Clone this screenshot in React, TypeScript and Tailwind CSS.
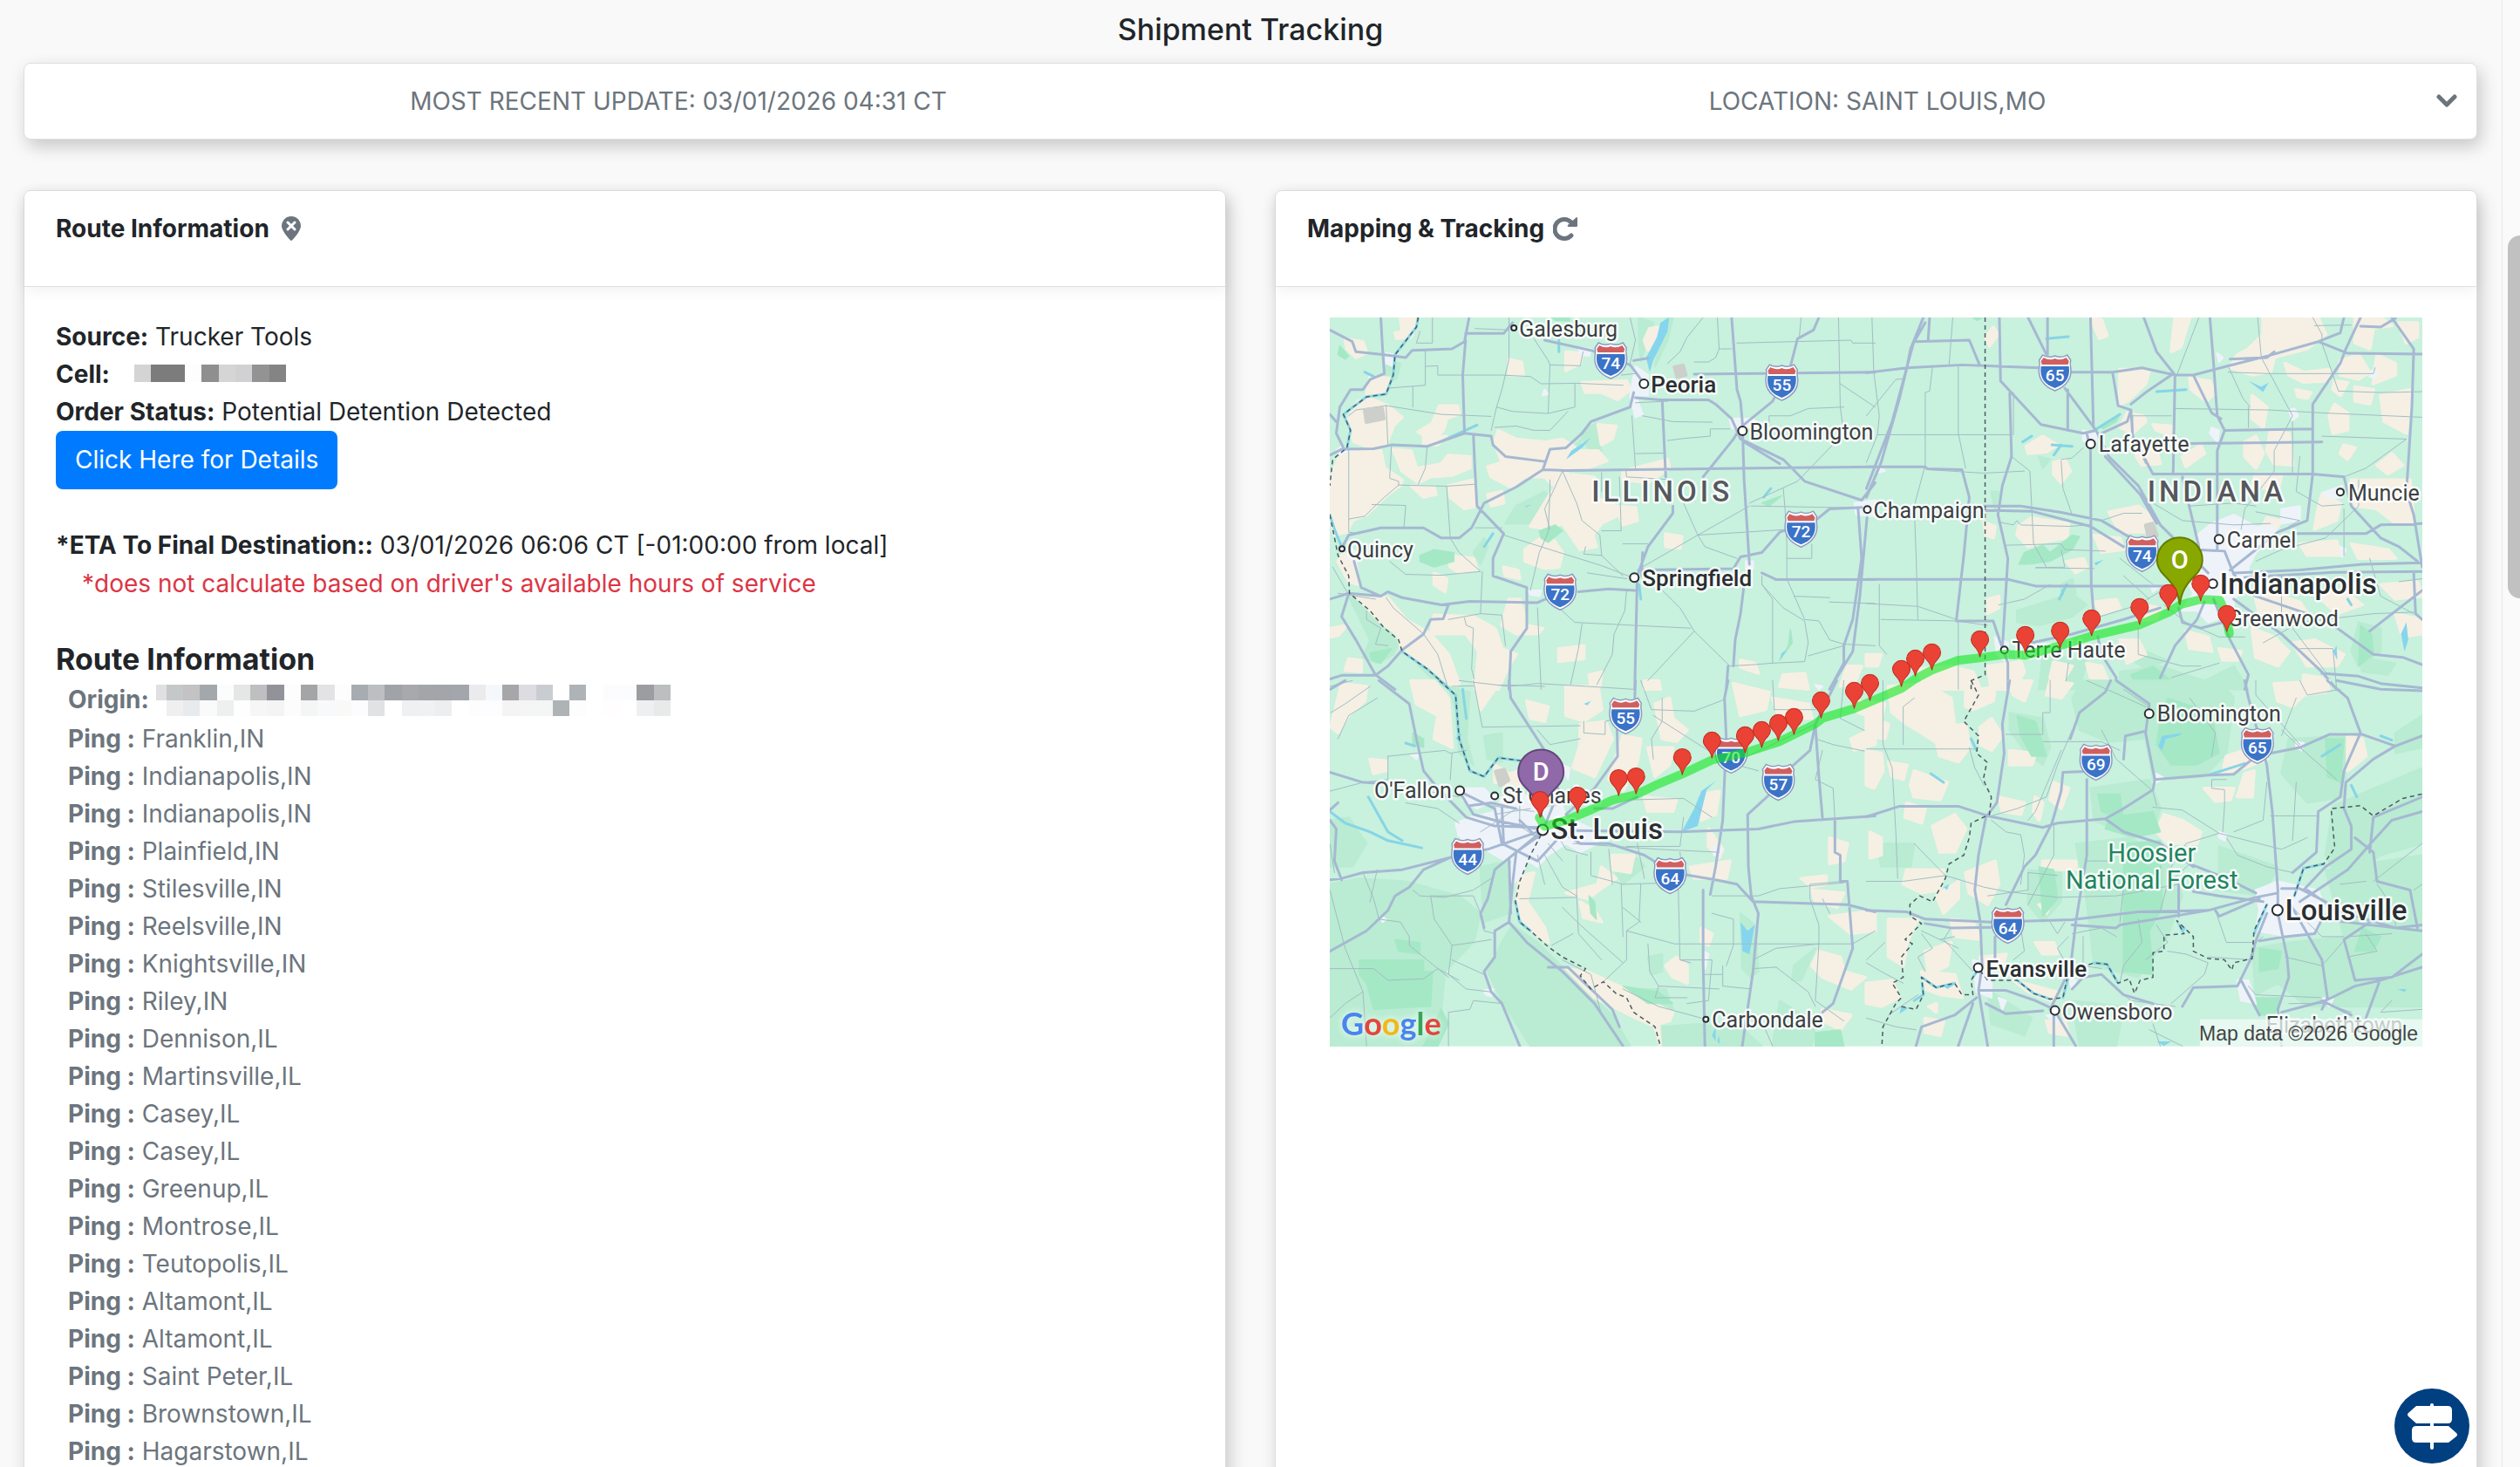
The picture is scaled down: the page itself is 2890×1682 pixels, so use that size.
const PINGS = [
  "Franklin,IN",
  "Indianapolis,IN",
  "Indianapolis,IN",
  "Plainfield,IN",
  "Stilesville,IN",
  "Reelsville,IN",
  "Knightsville,IN",
  "Riley,IN",
  "Dennison,IL",
  "Martinsville,IL",
  "Casey,IL",
  "Casey,IL",
  "Greenup,IL",
  "Montrose,IL",
  "Teutopolis,IL",
  "Altamont,IL",
  "Altamont,IL",
  "Saint Peter,IL",
  "Brownstown,IL",
  "Hagarstown,IL",
];

// Masked values are shown as rows of flat colour cells.
const CELL_MASK = ["#d4d4d4", "#7c7c7c", "#7c7c7c", "#fdfdfd", "#8f8f90", "#d5d5d5", "#d1d1d3", "#939394", "#848485"];

const ORIGIN_MASK = [
  [
    "#c4c8c9", "#c3c3c4", "#a3a8ac", "#fbfdfd", "#e5e7e6", "#bfbfc1", "#92939a", "#fcfdfc", "#a4a5a7", "#e3e3e5",
    "#fcfdfc", "#a7acb2", "#bbbfc1", "#a0a3a8", "#a8a9ac", "#a3a6a9", "#a2a6aa", "#a3a6ac", "#ebeaed", "#f4f8fb",
    "#a6a7a9", "#dddde1", "#c9cdd1", "#ffffff", "#adb3b6", "#ffffff", "#fcfcfe", "#fbfcfe", "#9b9da0", "#bcbfc0",
  ],
  [
    "#efefef", "#e8ebed", "#fafafa", "#eeefef", "#fdfefd", "#f5f6f5", "#f4f4f4", "#fcfcfc", "#f4f5f5", "#f8f9fa",
    "#f9f9f8", "#fcfcff", "#e1e2e4", "#ffffff", "#eff0f2", "#f0f1f3", "#edeef0", "#ffffff", "#fdfdfd", "#fdfdff",
    "#f4f4f4", "#f5f5f5", "#f4f5f5", "#aeb3b6", "#fdfdfd", "#ffffff", "#fffdfe", "#ffffff", "#eeeff1", "#e8eaea",
  ],
];

type TileData = {
  transform: string;
  fields: string;
  woods: string;
  parks: string;
  urban: string;
  water: string;
  rivers: string;
  thin: string;
  roads: string;
  borders: string;
};

const NW: TileData = {
  transform: "translate(-15 -14) scale(0.40816 0.33333)",
  fields:
    "M80,115 L130,125 L140,165 L110,180 L85,150Z M235,42 L285,42 L265,110 L225,115 L220,95 L240,90Z M150,245 L205,250 L185,300 L140,305Z M115,330 L150,320 L200,345 L240,385 L215,415 L195,480 L150,490 L105,470 L85,400Z M345,345 L395,345 L400,375 L365,390 L355,430 L325,465 L285,435 L325,405Z M540,185 L575,195 L580,240 L540,240Z M700,160 L745,165 L740,200 L700,225Z M745,265 L870,260 L880,290 L845,325 L800,300 L755,300Z M935,80 L960,75 L955,120 L930,155 L920,120Z M790,410 L840,415 L830,460 L800,480Z M510,430 L560,460 L640,470 L690,460 L740,500 L790,500 L815,535 L760,560 L710,565 L665,620 L640,590 L585,590 L545,625 L490,590 L480,555 L520,540 L500,470Z M300,450 L365,450 L340,480 L300,480Z M70,500 L180,500 L190,560 L240,600 L235,620 L200,650 L140,720 L100,740 L85,780 L50,790 L37,720 L37,600Z M215,495 L265,500 L280,560 L350,545 L370,515 L430,520 L430,560 L380,585 L320,590 L285,610 L240,570Z M265,620 L330,625 L335,650 L300,660Z M370,620 L440,600 L450,690 L415,700 L375,660Z M480,650 L520,640 L525,680 L490,690Z M700,580 L780,590 L775,660 L830,680 L850,720 L800,750 L775,790 L785,830 L740,840 L690,750 L650,770 L600,760 L655,650Z M860,570 L985,530 L990,560 L930,610 L860,600Z M840,690 L895,695 L900,740 L860,755Z M980,785 L1025,795 L1020,835 L980,830Z M585,840 L650,780 L690,850 L680,900 L640,905 L585,880Z M525,900 L565,910 L570,940 L530,930Z M370,860 L440,870 L450,910 L400,920 L375,900Z M75,850 L110,880 L115,960 L90,950 L60,880Z M330,920 L365,940 L360,985 L330,960Z M110,1000 L200,1005 L250,1080 L320,1130 L370,1200 L400,1300 L380,1320 L310,1240 L240,1185 L225,1130 L180,1090Z M330,1065 L440,1070 L500,1110 L520,1180 L560,1200 L535,1250 L510,1320 L445,1320 L455,1190 L420,1130 L320,1130Z M540,1010 L570,1010 L590,1100 L635,1110 L620,1130 L560,1130 L520,1100Z M680,1180 L750,1170 L750,1215 L680,1225Z M765,1270 L800,1260 L795,1310 L770,1310Z M40,1110 L85,1100 L60,1135 L40,1140Z M90,1215 L125,1220 L125,1260 L80,1255Z M1190,1220 L1230,1230 L1240,1265 L1190,1245Z M1310,1270 L1370,1265 L1380,1320 L1300,1310Z M1490,1240 L1530,1240 L1510,1300 L1470,1310Z M920,1290 L960,1290 L965,1320 L920,1320Z",
  woods:
    "M200,190 L235,200 L225,250 L200,270 L190,240Z M560,690 L640,640 L655,660 L610,730 L600,750 L530,750Z M90,1000 L150,1050 L200,1110 L230,1160 L215,1200 L170,1230 L130,1210 L150,1150Z M740,440 L785,405 L790,470 L800,500 L770,510Z M440,850 L470,800 L480,830 L460,890Z M905,42 L945,60 L910,190 L905,120Z M980,42 L1000,42 L985,120 L950,210 L960,150Z M280,1230 L340,1260 L370,1320 L320,1280Z M685,530 L745,460 L720,510 L695,555Z",
  parks:
    "M65,140 L90,175 L80,185 L60,170Z M290,860 L330,840 L385,850 L385,880 L330,900 L290,880Z M625,775 L670,755 L690,775 L650,815 L630,800Z M1330,1115 L1335,1160 L1300,1220 L1325,1170Z M1250,680 L1305,655 L1270,690Z M660,42 L710,42 L710,55 L670,52Z M150,1195 L210,1180 L180,1230 L155,1220Z",
  urban:
    "M195,165 L220,170 L215,210 L195,200Z M895,210 L930,240 L930,310 L895,310 L915,375 L895,385 L880,310Z M1160,390 L1225,390 L1240,410 L1180,430 L1165,420Z M1205,880 L1225,880 L1225,905 L1205,905Z M70,485 L100,500 L70,515 L55,500Z M595,980 L630,980 L625,1000 L600,995Z M100,840 L125,860 L110,885 L85,870Z M1510,680 L1568,670 L1568,725 L1515,720Z M640,290 L650,305 L635,310Z M735,145 L770,150 L765,175 L740,170Z",
  water:
    "M965,60 L990,42 L985,90 L945,190 L935,230 L925,180 L955,110Z M770,455 L745,490 L700,530 L715,500Z M1320,1185 L1300,1220 L1305,1195Z M585,690 L605,685 L590,693Z",
  rivers:
    "M285,42 L280,75 L220,170 L215,240 L195,305 L140,315 L75,375 L95,430 L85,490 M37,720 L50,770 L70,830 M240,1190 L310,1250 L375,1320 M905,960 L910,1010 M345,470 L450,412 M470,830 L495,785 M135,230 L160,245 M680,160 L680,120 M1255,660 L1275,630",
  thin:
    "M290,90 L280,130 L325,130 L325,42 M305,155 L305,275 L200,285 M305,210 L340,208 L340,240 L520,240 L600,245 L630,270 L730,268 L860,275 M540,42 L540,185 L520,290 L505,350 L490,430 M610,115 L650,190 L655,205 L740,208 L748,160 M655,205 L650,370 M725,268 L725,350 L650,372 L550,365 L505,350 M195,345 L350,375 L490,382 M195,345 L200,480 M90,380 L110,360 L195,345 M500,420 L560,415 L610,430 L655,430 L705,365 M90,490 L90,780 L120,785 M210,480 L205,595 L230,605 L230,618 L365,622 L445,615 M310,490 L305,560 L285,615 M230,618 L190,660 L155,700 L135,725 L90,735 M155,685 L250,688 L245,765 M365,622 L375,800 M445,765 L520,765 M525,790 L800,895 L885,935 M655,600 L655,640 L650,780 L625,850 L600,980 M690,570 L730,680 L745,740 L795,790 L800,860 L860,930 M690,570 L640,700 L655,770 M800,775 L855,775 L850,590 M860,820 L930,820 M755,830 L750,855 L800,860 M800,575 L800,640 M868,565 L870,590 L1000,600 M885,380 L895,560 M895,510 L975,508 M985,465 L1030,458 L1105,450 L1105,425 L1160,425 M915,380 L1000,400 L1110,402 M895,335 L985,330 M1085,42 L1040,110 L1020,160 L985,200 M1125,42 L1130,150 L1165,150 M1130,150 L1120,180 L1100,195 L1060,195 M1180,130 L1500,120 L1505,130 L1568,130 M1465,42 L1470,350 L1480,440 L1350,605 L1215,680 M1270,405 L1270,380 L1330,380 L1380,355 L1480,350 M1470,270 L1568,350 M1330,770 L1070,790 L1215,690 M1030,680 L1070,790 L900,910 M1220,690 L1450,695 L1520,695 M1310,630 L1315,700 L1320,820 L1320,870 L1390,870 L1390,820 M1320,870 L1320,940 L1370,1080 L1410,1085 L1440,1150 L1480,1165 L1568,1170 M1070,790 L1090,830 L1180,870 M970,980 L1020,1040 L1060,1120 L1160,1240 M1060,1120 L930,1290 M1250,930 L1250,960 L1280,1010 L1280,1230 L1230,1235 L1160,1240 M1250,960 L1310,1040 L1370,1085 L1380,1160 L1370,1225 L1280,1230 M1380,1205 L1480,1170 M1440,1020 L1568,1025 M1340,1000 L1440,1005 M680,1040 L725,1090 L1050,1110 M745,1095 L735,1180 L710,1320 M870,980 L865,1050 L835,1130 L830,1200 L780,1320 M620,1040 L625,1180 L630,1320 M465,915 L460,1060 L370,1080 M460,1060 L520,1065 L530,1170 M205,880 L250,925 L350,928 L460,915 L400,850 L375,800 M195,1005 L215,1040 L300,1130 L340,1200 L370,1320 M380,1310 L530,1305 L640,1310 M140,1050 L140,1080 L180,1110 L165,1165 L200,1170 M45,900 L85,985 M415,1075 L420,1100 L440,1110 L435,1250 L450,1320 M270,280 L270,350 M445,80 L540,85 M855,240 L895,235 M880,42 L895,120 L880,200 M760,920 L870,940 M1360,42 L1355,110 M165,1010 L60,990",
  roads:
    "M37,85 L100,125 L110,160 L190,170 L250,180 L268,155 L380,150 L415,125 L428,42 M180,42 L185,150 L190,235 L150,255 L130,290 L95,290 L65,350 L55,440 L75,490 M37,515 L70,495 L160,493 L210,480 L310,485 L415,440 L490,450 L495,480 L530,520 L640,537 M418,120 L410,240 L415,440 M418,97 L525,97 L550,60 M440,445 L443,530 L450,690 L525,785 L495,870 L495,930 L590,970 L590,1110 L545,1190 L540,1320 M70,835 L90,790 L180,765 L300,765 L350,800 L400,800 L435,765 L470,680 L560,625 L635,565 L655,495 L700,490 L745,440 L770,400 L880,350 L890,300 M635,565 L700,568 L1568,555 M640,120 L770,155 L880,205 L920,270 M890,190 L930,182 M895,318 L965,325 L1100,325 L1120,340 L1165,390 L1190,460 L1310,530 L1370,605 L1530,670 L1568,610 M1200,470 L1300,545 M970,325 L980,590 M1165,42 L1180,290 L1190,330 L1195,400 L1200,600 L1215,890 M1410,42 L1395,85 L1350,115 L1330,210 L1280,330 L1220,390 L1190,420 L1170,460 L1085,590 M1000,690 L1000,715 L930,830 L900,930 L893,1320 M915,850 L912,930 M1060,237 L1568,230 M910,910 L1170,905 L1190,865 L1250,850 L1300,780 L1400,740 L1440,700 L1530,695 M735,985 L820,975 L895,980 M37,1010 L90,990 L180,1000 L200,985 L240,1005 L350,1030 L430,1018 L620,1022 L680,990 M105,880 L125,970 L180,1000 M90,990 L70,1070 L110,1150 L165,1270 L220,1320 M37,1285 L70,1272 L165,1272 L200,1240 L240,1185 L300,1130 L320,1080 L355,1078 L370,1030 M1250,920 L1290,943 L1568,943 M1520,700 L1530,870 L1505,1080 L1480,1170 L1480,1230 L1440,1320 M1200,960 L1190,1060 L1175,1150 L1170,1240 M1545,730 L1525,1000 L1505,1190 L1450,1300 M1155,1240 L1150,1320 M37,375 L55,400",
  borders:
    "M285,42 L280,75 L220,170 L215,240 L195,305 L140,315 L75,375 L95,430 L85,490 L45,530 L37,620 M37,720 L60,860 L90,930 L92,990 L150,1050 L190,1110 L230,1150 L240,1190 L310,1250 L375,1320",
};

const NE: TileData = {
  transform: "translate(615 -14) scale(0.42092 0.33333)",
  fields:
    "M345,75 L358,100 L335,140 L325,110Z M610,42 L640,50 L655,105 L635,115Z M840,42 L880,42 L855,145 L830,160Z M1080,42 L1230,42 L1250,100 L1200,150 L1110,180 L1100,230 L1050,240 L990,215 L1010,170 L1040,150 L1080,100Z M1330,42 L1400,42 L1430,70 L1380,80 L1370,150 L1330,130Z M1450,60 L1500,60 L1500,110 L1470,130Z M690,220 L770,220 L760,270 L710,330 L690,340Z M880,250 L935,260 L950,300 L925,330 L885,290Z M1140,200 L1190,230 L1260,220 L1260,260 L1190,265 L1150,240Z M1290,190 L1340,170 L1370,230 L1340,255 L1290,240Z M1390,170 L1440,200 L1440,240 L1380,270Z M1050,310 L1090,350 L1080,420 L1050,390Z M1170,290 L1210,300 L1200,320 L1175,315Z M1275,260 L1310,265 L1290,310 L1270,290Z M1330,280 L1380,290 L1370,340 L1330,330Z M1275,340 L1310,370 L1310,430 L1270,440 L1260,380Z M1400,310 L1480,290 L1470,440 L1410,400Z M710,370 L755,380 L760,400 L725,440 L690,420Z M780,410 L830,415 L825,445 L790,430Z M435,485 L480,450 L520,480 L490,505 L440,510Z M510,540 L540,530 L555,570 L530,610 L510,580Z M735,490 L790,500 L800,545 L750,550 L735,520Z M860,520 L910,480 L920,510 L870,555Z M1030,470 L1060,450 L1080,510 L1060,560 L1030,520Z M1100,430 L1150,440 L1160,550 L1110,545 L1090,500Z M1390,550 L1430,510 L1460,550 L1420,580Z M1300,480 L1330,490 L1310,530 L1290,510Z M1060,580 L1130,580 L1120,640 L1050,620Z M1320,600 L1480,600 L1490,750 L1440,750 L1390,700 L1330,690Z M1240,650 L1290,680 L1280,740 L1220,770 L1230,700Z M415,760 L450,730 L550,750 L545,800 L480,815 L440,830 L410,790Z M660,710 L740,690 L790,740 L770,780 L690,780Z M620,790 L690,800 L700,840 L640,850Z M320,745 L350,760 L345,800 L325,790Z M545,880 L590,870 L600,900 L570,920Z M1090,730 L1130,740 L1110,780 L1080,760Z M1180,820 L1280,810 L1290,860 L1200,860Z M1320,820 L1420,840 L1440,870 L1340,870Z M1060,1010 L1110,990 L1180,1020 L1200,1060 L1120,1090 L1070,1060Z M1230,1000 L1300,980 L1350,1030 L1280,1060Z M1400,960 L1500,950 L1513,1000 L1440,1010Z M1050,1110 L1110,1140 L1150,1190 L1120,1240 L1060,1210Z M1160,1160 L1220,1150 L1300,1200 L1280,1240 L1200,1240Z M1190,1270 L1240,1280 L1260,1320 L1190,1320Z M620,1020 L680,1010 L690,1040 L640,1060Z M330,1010 L360,1000 L360,1040 L330,1060Z M140,1250 L230,1240 L290,1260 L310,1320 L160,1320Z M330,1240 L420,1225 L430,1260 L400,1320 L340,1320Z M510,1225 L560,1240 L530,1300 L500,1280Z M600,1230 L640,1240 L660,1300 L610,1280Z M0,1200 L40,1200 L30,1240 L0,1240Z M760,1030 L800,1040 L790,1080 L740,1085Z M870,1120 L930,1140 L940,1190 L880,1180Z M960,1180 L1020,1190 L1010,1220 L970,1220Z M690,1150 L740,1150 L760,1200 L710,1230Z M1440,1060 L1513,1080 L1513,1130 L1460,1140Z",
  woods:
    "M410,1050 L560,990 L600,1030 L560,1070 L470,1100 L410,1090Z M480,1200 L600,1220 L580,1320 L470,1320Z M690,1260 L800,1240 L920,1290 L1000,1240 L1040,1320 L690,1320Z M700,1200 L760,1190 L820,1220 L760,1250Z M1340,1090 L1400,1110 L1400,1190 L1340,1240 L1320,1190Z M1340,1210 L1440,1230 L1420,1270 L1350,1260Z M530,960 L560,940 L570,990 L530,1030Z M470,520 L500,530 L480,560Z M340,640 L360,640 L350,700Z M1060,170 L1090,160 L1090,220 L1060,220Z",
  parks:
    "M415,890 L430,850 L480,825 L500,850 L560,790 L580,795 L560,840 L500,880 L440,890Z M1345,1100 L1375,1130 L1380,1200 L1340,1240Z M290,42 L315,45 L300,52Z M640,420 L690,375 L680,400 L645,425Z M720,1270 L780,1240 L830,1290 L810,1320 L740,1320Z",
  urban:
    "M900,790 L940,750 L1000,720 L1060,760 L1110,760 L1120,790 L1060,850 L1040,900 L1040,960 L1000,1010 L1000,1060 L930,1090 L900,1050 L860,1050 L890,990 L870,940 L900,860Z M1130,700 L1180,690 L1180,740 L1130,750Z M590,430 L625,440 L625,480 L590,465Z M940,420 L960,430 L955,470 L935,440Z M1150,360 L1165,355 L1175,380 L1160,395Z M1240,645 L1295,620 L1295,660 L1260,665Z M350,1140 L385,1160 L385,1230 L355,1200Z M1375,225 L1390,230 L1385,250 L1370,245Z M955,165 L970,180 L960,195Z M775,960 L795,970 L780,985Z M1290,830 L1305,840 L1295,865Z M35,550 L50,570 L35,575Z",
  water:
    "M1040,260 L1075,280 L1095,265 L1080,298Z M1455,1130 L1470,1090 L1475,1150 L1465,1190Z M1270,1190 L1280,1170 L1282,1220Z M620,885 L645,875 L625,895Z M540,970 L535,1000 L530,980Z",
  rivers:
    "M490,115 L550,108 M790,297 L870,290 M505,480 L560,485 M425,470 L450,450 M510,515 L530,480 M1310,1010 L1320,1030 M620,430 L690,375 M525,1010 L545,960",
  thin:
    "M15,42 L20,230 L35,380 L30,445 L0,540 M0,380 L80,255 L105,252 M235,42 L225,205 M180,210 L172,295 L160,300 L160,550 L130,690 L135,855 L140,1080 M30,445 L390,445 M250,210 L250,440 L270,560 M165,565 L320,577 L430,570 M395,520 L445,570 L455,820 L490,900 M360,745 L400,755 L410,740 L420,755 L550,760 L610,755 M375,825 L530,820 L540,840 L650,845 M530,840 L540,900 L460,902 L620,905 M530,535 L535,630 L560,720 M590,490 L560,525 L530,530 M725,380 L830,380 M725,380 L725,450 L760,545 M840,355 L1100,360 L1240,370 L1513,385 M985,230 L1100,235 L1380,235 L1385,215 M985,210 L1025,320 L1045,350 M1065,42 L1075,180 L1160,380 L1110,500 L1110,570 L1030,700 L1020,770 M905,42 L845,240 M1240,100 L1240,130 L1285,295 L1400,300 L1513,297 M1240,450 L1470,460 L1360,560 L1300,590 M1160,400 L1160,580 M1180,520 L1170,640 L1240,690 L1300,685 M640,740 L700,715 L750,715 M880,690 L1000,680 L1060,690 M780,680 L860,740 L1000,755 L1100,750 M1060,710 L1180,740 L1150,760 M810,1030 L870,1090 L960,1140 L1030,1140 M690,870 L780,960 M700,930 L770,1010 M40,1080 L245,1085 L330,1100 M0,1025 L140,1035 L245,1080 M35,960 L35,1170 L55,1200 M250,1090 L250,1320 M360,1030 L430,1010 L500,960 M610,1080 L740,1030 L830,960 M740,1110 L740,1200 L860,1240 L910,1240 M1080,1160 L1180,1090 L1380,1060 L1490,1055 M1130,930 L1130,1060 L1250,1260 M1370,870 L1400,1000 L1490,1060 M1450,950 L1513,940 M1340,600 L1340,690 L1250,800 L1130,840 L1060,880 M1300,700 L1300,860 M550,1230 L540,1320 M960,1230 L830,1280 M1180,1180 L1270,1180 L1280,1320 M1040,420 L1040,350 M400,445 L400,300 M1220,70 L1320,68 M1215,42 L1240,100",
  roads:
    "M155,42 L120,150 L110,215 L90,320 L40,540 L0,660 M160,60 L128,130 L70,400 L0,630 M0,232 L110,215 L260,205 L470,215 M560,230 L670,230 L750,215 L840,240 L890,240 L980,210 L1090,175 L1230,125 L1290,95 L1300,42 M130,125 L280,120 L308,205 M172,42 L168,120 M362,42 L365,260 L475,410 L590,440 L625,430 M390,300 L395,520 L370,620 L358,720 L385,870 L370,1180 M440,42 L490,170 M493,42 L493,170 M540,285 L625,430 L660,520 L740,620 L800,755 L860,830 L930,920 M650,520 L745,650 L790,750 M610,42 L618,420 M548,290 L548,430 M670,230 L685,345 L720,360 L710,400 L640,440 M720,340 L760,300 L830,240 M755,42 L790,160 L840,240 L835,580 M935,42 L945,200 L955,380 L975,430 L955,500 L955,840 M890,240 L940,370 L965,390 M975,430 L1215,425 M880,475 L1240,470 M1345,42 L1305,150 L1290,200 L1215,340 L1215,580 L1200,740 L1120,780 L1030,870 L990,910 M990,185 L1090,180 L1110,160 M1230,125 L1310,165 L1513,168 M1430,42 L1490,150 L1485,350 L1470,640 L1490,720 L1513,900 M1345,72 L1400,75 L1440,45 M0,555 L160,555 L165,562 L260,565 L280,660 L265,860 L245,1080 M320,690 L420,690 L530,712 L640,740 L720,800 M320,705 L450,708 L610,760 L700,830 M0,942 L385,942 L460,965 L820,965 M600,440 L610,500 L612,960 L620,1080 M245,1085 L345,1085 L365,1160 L385,1230 L385,1320 M450,1160 L560,1130 L700,1080 L800,1040 M1000,920 L1180,910 L1350,890 L1513,885 M1030,935 L1270,918 L1513,915 M1170,785 L1360,785 L1400,755 L1513,750 M720,360 L725,450 L780,580 L1215,580 L1300,590 L1320,690 L1400,800 L1450,830 L1500,880 M900,840 L975,845 L1000,925 L1060,1000 L1200,1060 M1260,1090 L1380,1200 L1460,1210 L1513,1235 M1000,1010 L1130,1130 L1240,1260 L1280,1320 M1240,1265 L1340,1275 L1400,1300 L1513,1315 M920,1020 L900,1080 L840,1170 L800,1280 M945,1010 L990,1150 L1040,1270 L1030,1320 M860,590 L905,830 M850,1040 L860,1090 L910,1110 L970,1090 M630,1140 L640,1200 L680,1280 L675,1320 M1370,1120 L1513,980 M1490,920 L1495,1060 L1513,1080",
  borders: "M323,42 L323,1270 L285,1290 L285,1320",
};

const SW: TileData = {
  transform: "translate(-15 416) scale(0.40816 0.33333)",
  fields:
    "M70,10 L140,20 L135,70 L90,120 L60,180 L40,160Z M265,0 L330,0 L370,60 L380,230 L330,200 L340,120 L280,80Z M440,0 L510,0 L500,30 L460,100 L450,30Z M150,270 L195,275 L195,310 L160,320Z M590,70 L650,90 L640,140 L600,130Z M700,20 L790,20 L800,100 L750,140 L700,120Z M740,150 L810,140 L830,200 L780,330 L720,300 L740,220Z M860,190 L910,200 L900,280 L860,380 L820,340Z M950,80 L990,60 L1000,130 L1040,170 L1010,210 L970,200Z M930,230 L1000,230 L990,290 L950,330Z M1170,10 L1270,40 L1260,100 L1190,120Z M1280,60 L1380,80 L1390,130 L1300,130Z M1080,390 L1130,380 L1120,460 L1080,480Z M920,400 L1010,410 L1000,450 L930,450Z M830,600 L890,600 L880,660 L830,650Z M570,670 L610,660 L590,760 L640,850 L650,900 L600,860 L560,780Z M700,730 L790,700 L800,640 L840,680 L760,750Z M1050,640 L1160,620 L1150,680 L1060,680Z M1440,540 L1490,560 L1480,620 L1440,630Z M1360,680 L1430,670 L1430,700 L1390,710Z M1390,720 L1480,730 L1460,780 L1400,760Z M1440,810 L1568,790 L1568,860 L1500,870Z M1410,930 L1470,950 L1480,1000 L1540,1020 L1500,1060 L1420,1020 L1390,980Z M980,980 L1010,950 L1040,980 L1040,1040 L1000,1020Z M1080,850 L1110,870 L1100,910 L1080,900Z M700,990 L760,1000 L850,1050 L930,1100 L1000,1140 L990,1170 L960,1180 L965,1256 L950,1190 L880,1150 L780,1090Z M1420,1130 L1500,1150 L1470,1200 L1420,1170Z M1100,510 L1140,580 L1130,610 L1100,570Z M1500,200 L1568,160 L1568,220 L1510,240Z M1500,60 L1568,90 L1568,130 L1520,110Z M740,760 L780,790 L800,830 L750,815Z M500,290 L540,320 L600,300 L570,360 L500,350Z",
  woods:
    "M37,700 L120,680 L250,690 L400,740 L460,800 L440,900 L360,1000 L340,1256 L37,1256Z M460,640 L540,620 L540,800 L470,830Z M550,840 L620,900 L720,1020 L830,1150 L880,1256 L600,1256 L520,1100 L480,1000 L520,900Z M370,20 L430,40 L420,200 L440,290 L400,250 L390,100Z M840,660 L900,610 L920,640 L860,700Z M470,190 L520,180 L520,280 L480,270Z M1380,940 L1400,920 L1360,1030 L1335,1030 L1340,980Z M930,950 L970,940 L970,1000 L940,1010Z M830,1060 L980,1060 L1000,1130 L920,1120Z M970,1190 L1070,1180 L1200,1200 L1250,1256 L970,1256Z M1300,1100 L1400,1180 L1390,1256 L1280,1256Z M37,480 L90,470 L140,560 L100,640 L37,640Z M1190,800 L1230,840 L1240,1000 L1220,1020 L1195,990Z",
  parks:
    "M120,960 L300,960 L300,1000 L325,1000 L320,1120 L160,1130 L140,1040 L120,1010Z M270,180 L300,200 L300,230 L270,220Z M765,740 L780,760 L785,820 L770,800Z M350,1130 L370,1180 L340,1256 L300,1256Z M860,1050 L960,1070 L1000,1110 L930,1110Z M1400,1210 L1470,1200 L1480,1256 L1400,1256Z M220,890 L290,900 L290,940 L230,930Z",
  urban:
    "M390,490 L430,470 L500,450 L520,400 L580,390 L640,440 L690,430 L700,470 L740,490 L790,520 L790,560 L740,590 L700,560 L650,600 L620,640 L580,610 L530,620 L500,600 L460,570 L400,540Z M560,600 L590,610 L580,660 L550,700 L540,650Z M410,370 L470,370 L500,410 L450,440 L410,410Z M470,1065 L495,1060 L490,1085 L475,1080Z M1115,570 L1140,580 L1130,600 L1115,600Z M265,255 L285,255 L280,270Z M180,810 L195,820 L185,830Z M690,290 L710,300 L705,340Z M1085,930 L1100,940 L1090,990Z M1400,15 L1420,20 L1410,30Z",
  water:
    "M1120,345 L1095,375 L1070,500 L1025,520 L1060,440 L1080,380Z M1190,830 L1210,860 L1230,840 L1215,940 L1195,930Z M390,200 L405,180 L405,210Z M750,80 L770,70 L760,85Z M1110,1220 L1120,1190 L1120,1240Z M1125,1240 L1130,1220 L1132,1250Z",
  rivers:
    "M345,0 L390,50 L400,200 L430,310 L470,330 L510,265 L600,280 L650,340 M37,450 L80,490 L150,520 L200,550 L295,575 M145,400 L200,520 L240,550 M250,215 L275,225 M558,760 L570,830 L600,860 M410,30 L420,130",
  thin:
    "M200,260 L360,240 L375,250 L420,240 M380,250 L375,340 M150,20 L80,80 L40,110 M60,200 L90,120 L170,60 M200,260 L200,340 L130,350 L37,380 M37,20 L100,0 M400,0 L540,20 L620,10 L760,20 L890,30 M440,0 L465,160 L740,155 M750,140 L750,180 L810,185 L810,140 L845,130 M620,170 L655,220 L740,200 M910,0 L940,100 L1060,105 L1145,65 M945,120 L1150,280 M970,60 L970,140 L940,200 L945,270 M1150,280 L1240,310 M1210,260 L1400,150 M1280,0 L1285,100 M1285,100 L1400,100 M1480,0 L1470,130 L1568,190 M1400,200 L1450,220 L1568,250 M1420,240 L1400,340 L1450,370 L1455,480 M880,410 L1030,405 L1110,470 M1030,470 L1020,570 L870,570 M720,560 L960,580 L1130,590 M640,600 L690,710 L730,740 L735,870 L800,960 M730,600 L730,745 L570,750 M770,590 L770,670 L860,700 L1000,695 M820,580 L830,700 M855,700 L860,880 M910,700 L905,830 L870,860 L1005,905 L1100,905 L1410,905 M1015,700 L1020,960 L1050,970 M860,780 L910,830 M690,780 L740,840 L860,970 M660,910 L720,870 M870,860 L870,960 L805,1035 M930,905 L935,1000 L960,1050 L1130,1060 M960,1050 L950,1090 L1040,1090 M1020,960 L1110,960 L1100,1100 L1040,1110 M1140,980 L1140,1050 L1220,1060 M1090,1010 L1140,1010 M1110,800 L1170,820 L1170,910 L1150,980 M1225,960 L1290,920 L1410,905 L1410,840 L1385,750 L1385,700 L1480,690 M1410,905 L1505,905 L1568,860 M1410,905 L1400,1100 L1480,1170 M1110,740 L1240,740 L1300,715 L1480,695 M1420,750 L1440,800 M1290,985 L1380,1070 L1400,1120 M1225,990 L1290,985 M1020,590 L1030,700 M900,560 L920,680 M320,740 L440,740 L460,800 M320,740 L330,820 L380,910 L370,1010 L420,1060 L490,1070 M150,760 L170,650 M130,660 L160,750 L175,820 L235,830 L260,880 L260,910 L310,960 L370,1020 M37,720 L80,920 L130,1070 L140,1256 M37,990 L120,990 L160,990 L200,1030 L300,1025 L340,990 L400,1030 M130,1070 L80,1110 L37,1160 M270,720 L290,740 L360,745 L440,720 L490,680 M380,960 L470,1010 M460,800 L470,860 L500,870 M380,910 L440,900 L490,890 M520,1110 L440,1100 L430,1130 L370,1140 L370,1256 M490,430 L610,450 M500,460 L600,440 M460,520 L560,440 M570,430 L570,500 L620,540 M600,400 L640,430 M650,560 L690,620 M620,600 L640,700 M37,560 L50,660 M400,540 L380,620 M680,540 L700,580 L760,600 M400,490 L340,440 L250,420 M310,380 L400,400 M860,1060 L960,1120 L1080,1160 M1280,1256 L1260,1200 L1210,1160 M690,960 L770,1010 L800,1150",
  roads:
    "M37,315 L90,335 L130,350 L200,355 M400,380 L440,460 L500,480 L620,510 M175,0 L260,80 L280,200 L300,310 L340,370 L420,470 L500,500 L620,505 M540,0 L545,60 L640,240 L680,380 L640,500 M895,0 L893,60 M843,150 L845,260 L780,370 L700,460 M660,500 L740,560 L820,560 L920,600 L1000,660 L1120,685 L1180,700 L1225,760 L1490,770 L1568,795 M780,440 L830,440 L900,400 M720,515 L1020,520 L1240,510 L1340,485 L1568,465 M1155,0 L1145,60 L1150,200 L1140,480 L1120,640 L1105,735 M1460,0 L1400,150 L1385,240 L1330,300 L1300,360 L1210,460 L1212,640 L1220,740 L1240,800 L1225,1000 L1195,1256 M1400,150 L1410,330 L1420,470 M1455,480 L1455,590 L1470,600 L1470,690 L1490,690 L1505,920 L1450,1110 L1420,1140 M1085,720 L1085,970 L1090,1256 M37,685 L70,680 L130,660 L240,650 L370,610 M37,930 L140,860 L200,790 L220,740 L260,710 L300,650 L390,600 L480,580 L620,520 M640,520 L560,590 L550,700 L540,830 L590,900 L690,1000 L780,1110 L860,1256 M630,520 L540,610 L545,800 M650,985 L705,985 L830,1130 L850,1190 M540,830 L500,860 L500,950 L470,1000 L490,1070 L520,1110 L570,1256 M560,590 L500,650 L480,750 L460,800 L470,850 M400,380 L500,440 L520,560 L620,620 L680,540 M430,430 L490,420 L560,440 M520,430 L525,560 M570,480 L620,540 M37,445 L60,420 M37,480 L55,510 L50,620 L70,685 M37,30 L80,0",
  borders:
    "M345,0 L390,50 L400,200 L430,310 L470,330 L510,265 L600,280 L650,340 M630,530 L600,600 L570,690 L558,760 L570,830 L600,860 L650,915 L690,950 L755,990 L740,1015 L770,1060 L805,1035 L840,1075 L870,1090 L890,1140 L950,1190 L965,1256",
};

const SE: TileData = {
  transform: "translate(615 416) scale(0.42092 0.33333)",
  fields:
    "M60,20 L160,10 L230,60 L240,160 L210,230 L150,180 L110,150 L70,110Z M270,40 L350,20 L345,70 L290,100 L270,90Z M500,0 L560,10 L530,60 L490,50Z M0,70 L50,80 L40,130 L0,130Z M180,160 L270,150 L280,230 L250,280 L200,260Z M0,240 L40,250 L45,310 L20,370 L0,360Z M310,160 L340,130 L370,190 L340,240 L310,220Z M60,280 L110,290 L100,340 L70,330Z M130,310 L220,350 L200,410 L130,400 L120,360Z M390,240 L460,250 L450,290 L390,290Z M360,400 L430,420 L420,460 L370,450Z M460,400 L480,420 L470,480 L455,450Z M510,350 L550,370 L530,440 L500,410Z M110,420 L160,440 L150,490 L105,470Z M180,500 L240,460 L270,510 L240,590 L200,590Z M10,520 L40,540 L40,600 L10,610Z M110,650 L210,650 L200,720 L150,730 L100,700Z M270,660 L350,620 L360,700 L330,770 L280,730Z M190,740 L250,690 L250,750 L210,800Z M60,820 L140,820 L110,900 L100,980 L60,950Z M480,620 L570,620 L570,650 L480,650Z M230,820 L290,830 L310,890 L240,880Z M160,930 L230,900 L220,980 L170,1010Z M0,1040 L70,1030 L90,1090 L40,1120 L0,1110Z M460,900 L510,900 L520,940 L480,940Z M310,950 L380,940 L370,980 L310,980Z M160,1160 L210,1170 L200,1220 L160,1210Z M150,1000 L240,1010 L260,1090 L200,1080 L160,1060Z M400,1030 L520,1070 L500,1100 L440,1070Z M490,1170 L540,1170 L550,1220 L500,1210Z M1110,10 L1260,0 L1250,40 L1190,50 L1160,90 L1120,70Z M980,260 L1050,230 L1090,270 L1030,300 L970,320Z M1030,320 L1055,310 L1050,400 L1010,400Z M1310,190 L1350,200 L1360,260 L1310,310Z M920,370 L1000,370 L990,410 L950,415Z M810,460 L860,480 L910,520 L900,560 L820,560 L790,520Z M390,0 L450,0 L430,70 L400,50Z M470,770 L500,770 L490,800Z M170,1120 L190,1110 L190,1140Z M0,120 L60,150 L50,200 L0,190Z",
  woods:
    "M590,0 L960,0 L1000,60 L980,250 L920,330 L780,340 L760,200 L660,210 L580,170 L560,60Z M610,370 L770,340 L800,440 L780,520 L720,540 L620,480Z M570,560 L720,540 L820,620 L860,740 L820,880 L740,1020 L620,980 L600,760Z M1150,200 L1310,190 L1300,400 L1200,420 L1130,320Z M1270,430 L1513,300 L1513,560 L1400,600 L1290,700 L1250,600Z M960,570 L1120,640 L1080,740 L960,720Z M1250,650 L1513,600 L1513,1120 L1200,1120 L1120,1040 L1060,1080 L1050,920 L1150,900 L1300,880Z M440,650 L530,660 L530,760 L480,830 L440,770Z M390,110 L480,130 L500,230 L480,290 L430,240 L390,170Z M330,1060 L450,1160 L430,1220 L340,1180Z M560,1100 L700,1120 L680,1256 L580,1256Z M30,560 L130,560 L120,640 L40,640Z M1513,120 L1513,230 L1440,250 L1440,180Z",
  parks:
    "M700,560 L800,550 L805,780 L770,860 L780,1010 L700,1000Z M820,60 L940,110 L960,250 L900,290 L830,290 L790,220 L800,130Z M410,120 L460,140 L490,260 L450,260 L420,190Z M1250,200 L1300,200 L1290,350 L1255,330Z M630,390 L690,390 L700,480 L640,450Z M660,470 L780,450 L800,520 L730,540 L650,510Z M1070,920 L1130,930 L1120,990 L1070,1000Z M1350,850 L1400,880 L1380,930 L1330,930Z M470,640 L510,650 L520,750 L480,810Z M1060,1090 L1130,1090 L1110,1150 L1070,1150Z",
  urban:
    "M1060,720 L1120,690 L1230,720 L1250,790 L1220,870 L1150,880 L1060,860 L1070,790Z M290,960 L320,970 L340,1040 L340,1090 L300,1070Z M1010,1030 L1040,1030 L1060,1110 L1020,1100Z M960,520 L980,530 L975,550 L960,540Z M790,320 L810,335 L790,350Z M1170,210 L1190,215 L1185,240 L1170,230Z M550,1020 L570,1030 L560,1060Z M490,1150 L520,1150 L520,1180Z M1240,1090 L1270,1095 L1260,1120Z M360,1090 L380,1100 L370,1130Z",
  water:
    "M805,190 L860,180 L850,190 L815,200 L805,240 L795,225Z M845,830 L870,850 L860,870Z M95,1120 L115,1125 L90,1145Z M210,710 L225,700 L220,720Z M790,1240 L830,1240 L810,1256Z M1445,1060 L1470,1060 L1465,1070Z M210,1050 L240,1045 L220,1060Z",
  rivers:
    "M410,1030 L455,1075 L500,1095 M535,1090 L550,1020 M620,970 L655,975 L685,1040 M150,1020 L190,1055 L240,1040 M1165,740 L1190,645 L1245,630 M1055,870 L1090,770 M1240,260 L1290,220 M1320,360 L1335,400 M130,1100 L155,1080 L152,1040 M930,325 L1030,285 M175,320 L210,350 M1400,190 L1430,205 M290,1020 L305,990 M285,200 L300,240",
  thin:
    "M45,0 L45,220 L70,300 L80,520 L85,680 M0,235 L300,235 M100,220 L100,90 L130,60 M280,230 L295,300 L320,360 M380,185 L480,185 L480,110 L500,110 L500,0 M480,210 L640,210 L690,240 M640,170 L680,270 L780,380 L790,430 M530,240 L460,450 L440,480 M560,170 L520,290 L490,400 L410,440 L340,465 M340,480 L380,520 L420,530 L430,600 L420,700 M780,435 L860,445 L960,525 L1130,580 L1200,540 M960,525 L870,560 L830,640 M980,540 L1010,600 L1090,640 L1160,660 M880,60 L950,180 L940,260 M1000,520 L1080,480 L1090,350 M980,340 L940,340 L940,370 L975,375 L975,430 L970,520 M1100,465 L1230,465 M1170,350 L1160,550 M1180,230 L1280,340 M1130,170 L1190,240 M1060,0 L1060,50 L1180,220 M1170,60 L1130,190 M0,690 L100,690 L215,670 L320,710 L380,725 L520,745 L680,740 L850,700 M130,560 L215,670 M440,660 L520,670 M510,500 L510,600 L440,770 M330,740 L440,720 L440,660 M600,620 L660,620 M560,870 L640,850 L680,880 M590,880 L590,980 L640,990 M540,830 L520,870 L500,830 M420,850 L430,930 L400,960 M230,850 L210,890 L290,1000 M150,860 L250,920 M150,870 L180,920 L140,950 L160,1000 M200,890 L240,880 M0,960 L50,900 M0,970 L40,1000 L100,1040 M550,880 L520,920 L560,1010 M740,820 L750,900 L700,980 L690,1040 M790,840 L820,900 L760,960 M850,700 L900,720 M880,630 L820,700 L800,790 M950,790 L980,900 L1050,900 M1080,880 L1060,900 L1050,960 L930,950 M820,930 L870,940 L930,970 L920,1010 L830,1110 M1140,950 L1240,980 L1310,880 L1430,870 M1160,780 L1240,880 L1300,880 M1390,700 L1440,790 L1440,850 M1380,690 L1513,560 M1290,700 L1360,690 M1360,870 L1390,930 L1310,950 M1430,1100 L1400,1140 L1513,1130 M1150,1110 L1250,1110 L1320,1140 M1040,1050 L1060,1080 L1240,1090 M1513,700 L1490,720 M0,1160 L80,1190 L135,1200 M690,1070 L720,1100 L840,1120 M770,1200 L860,1256 M780,1180 L800,1256 M600,0 L690,50 L760,90 M700,30 L770,90 M1180,0 L1200,50 L1290,30 M140,1080 L60,1150 M700,710 L690,830 M800,640 L800,700",
  roads:
    "M0,468 L90,432 L250,432 L330,465 L480,505 L520,490 L650,475 L700,440 L780,375 L785,340 L760,180 L770,80 L680,0 M390,0 L370,150 L375,250 L355,420 L325,470 L305,600 L295,720 L310,830 L315,980 L305,1065 L330,1256 M665,0 L650,40 L580,110 L555,200 M600,340 L600,600 L570,830 L555,990 L500,1130 M700,270 L705,190 L755,175 M640,310 L535,315 L530,380 L505,490 L460,600 L430,640 L380,770 M785,340 L930,325 L1000,322 L1060,260 L1180,230 L1260,185 L1350,185 L1440,225 L1513,190 M1030,0 L1040,60 L1090,290 L1105,450 L1120,720 L1120,780 M1255,0 L1310,60 L1345,180 L1300,310 L1290,400 L1230,450 L1225,590 L1160,660 M1280,0 L1400,30 L1513,35 M1440,225 L1380,270 L1305,350 L1300,440 L1320,500 L1320,580 L1250,640 L1190,720 M1513,450 L1430,480 L1380,550 L1310,650 L1180,760 M1330,540 L1380,590 L1390,690 L1480,720 L1500,850 M1513,400 L1380,470 L1370,590 M0,790 L110,795 L160,820 L340,830 L560,822 L740,795 L930,790 L1060,745 L1120,730 M160,835 L230,850 L340,848 M350,880 L350,960 M560,840 L680,850 L690,840 L930,790 M890,725 L960,740 L1080,760 M890,635 L980,680 L1060,730 M850,700 L850,810 M650,475 L700,520 L800,560 L890,640 M950,790 L960,810 L1070,750 M1070,895 L1140,880 L1220,870 L1240,820 L1440,850 L1513,860 M1150,760 L1200,870 L1240,960 L1255,1090 L1240,1130 M1120,800 L1145,950 L1150,1020 L1120,1130 L1130,1256 M1090,800 L1060,895 L1045,960 L1010,1050 L890,1055 L860,1120 M1020,1030 L1070,1150 M1513,985 L1400,1030 L1330,1050 L1250,1100 L1130,1140 M1200,720 L1280,790 L1440,850 L1513,840 M1130,715 L1180,715 L1250,760 L1300,830 M1430,780 L1300,890 L1330,1030 L1430,1020 L1513,940 M1395,1040 L1360,1160 M1240,1100 L1320,1150 M305,1065 L380,1065 L460,1100 L512,1130 M325,1110 L380,1145 L480,1135 M300,1090 L240,1150 L150,1190 L135,1256 M290,1110 L250,1256 M520,1150 L570,1256 M510,1150 L510,1256 M560,1060 L590,1020 L640,1010 L700,1080 L780,1110",
  borders:
    "M285,0 L305,50 L265,140 L305,190 L300,250 L328,280 L318,340 L340,400 L335,460 L285,490 L280,540 L265,600 L225,630 L215,680 L180,760 L145,740 L118,770 L120,810 L150,835 L105,890 L125,905 L95,950 L100,1020 L70,1040 L95,1090 L80,1110 L45,1190 L42,1256 M95,1120 L135,1130 L155,1080 L150,1020 L190,1055 L240,1040 L260,1080 L290,1080 L285,1030 L305,990 L330,1030 L410,1030 L455,1075 L500,1095 L535,1090 L550,1000 L620,970 L655,975 L685,1040 L715,1025 L730,1075 L745,1030 L780,1020 L780,935 L810,930 L810,875 L865,870 L845,825 L890,880 L890,930 L930,955 L975,960 L995,995 L1000,970 L1050,955 L1055,860 L1090,770 M1165,740 L1190,645 L1245,630 L1275,575 L1265,440 L1345,430 L1380,465 L1460,405 L1513,390",
};

const TILES = [NW, NE, SW, SE];

const SHIELDS: [number, number, number][] = [
  [74, 322, 49],
  [55, 518, 74],
  [72, 540, 242],
  [72, 264, 314],
  [65, 831, 63],
  [74, 931, 270],
  [55, 339, 456],
  [70, 460, 501],
  [57, 514, 532],
  [44, 158, 617],
  [64, 390, 639],
  [69, 878, 509],
  [65, 1063, 490],
  [64, 777, 696],
];

type City = { name: string; x: number; y: number; dot?: [number, number, number]; bold?: boolean; large?: boolean };

const CITIES: City[] = [
  { name: "Galesburg", x: 217, y: 22, dot: [211, 12, 4] },
  { name: "Peoria", x: 368, y: 86, dot: [360, 76, 6], bold: true },
  { name: "Bloomington", x: 481, y: 140, dot: [473, 130, 6] },
  { name: "Champaign", x: 623, y: 230, dot: [616, 220, 5] },
  { name: "Springfield", x: 358, y: 308, dot: [349, 298, 6], bold: true },
  { name: "Quincy", x: 20, y: 275, dot: [14, 265, 4] },
  { name: "Lafayette", x: 881, y: 154, dot: [872, 145, 6] },
  { name: "Muncie", x: 1167, y: 210, dot: [1158, 200, 5] },
  { name: "Carmel", x: 1028, y: 264, dot: [1019, 254, 6] },
  { name: "Indianapolis", x: 1020, y: 317, dot: [1012, 305, 6], bold: true, large: true },
  { name: "Greenwood", x: 1029, y: 354 },
  { name: "Terre Haute", x: 782, y: 390, dot: [773, 381, 5] },
  { name: "O'Fallon", x: 51, y: 551, dot: [149, 542, 6] },
  { name: "St Charles", x: 198, y: 557, dot: [189, 548, 5] },
  { name: "St. Louis", x: 253, y: 598, dot: [244, 587, 7], bold: true, large: true },
  { name: "Carbondale", x: 438, y: 813, dot: [431, 804, 4] },
  { name: "Bloomington", x: 948, y: 463, dot: [939, 454, 6] },
  { name: "Louisville", x: 1095, y: 690, dot: [1086, 679, 7], bold: true, large: true },
  { name: "Evansville", x: 752, y: 755, dot: [743, 745, 6], bold: true },
  { name: "Owensboro", x: 839, y: 804, dot: [831, 794, 6] },
  { name: "Elizabethtown", x: 1073, y: 819 },
];

const cityFontSize = (city: City) => {
  if (city.large) return 33;
  return city.bold ? 26 : 25;
};

// Tip of every ping marker, in map units.
const PIN_TIPS: [number, number][] = [
  [998, 325],
  [961, 336],
  [1028, 360],
  [928, 352],
  [873, 365],
  [837, 379],
  [797, 384],
  [745, 389],
  [690, 404],
  [671, 411],
  [655, 423],
  [619, 439],
  [601, 448],
  [563, 459],
  [532, 478],
  [514, 485],
  [495, 493],
  [476, 499],
  [438, 505],
  [404, 524],
  [351, 546],
  [331, 548],
  [284, 568],
  [241, 573],
];

const ROUTE =
  "M240,573 L246,583 L271,576 L295,566 L324,553 L350,547 L373,536 L404,523 L438,507 L475,499 L515,486 L556,466 L565,459 L601,448 L620,440 L655,425 L671,414 L690,404 L719,393 L745,390 L773,386 L797,387 L820,381 L837,376 L873,365 L928,352 L961,338 L975,329 L998,323 L1020,324 L1027,340 L1031,362";

const Tile = ({ tile }: { tile: TileData }) => (
  <g transform={tile.transform} strokeLinejoin="round" strokeLinecap="round" fill="none">
    <path d={tile.woods} fill="#b9ecd2" stroke="#b9ecd2" strokeWidth={6} />
    <path d={tile.fields} fill="#f5f0e3" stroke="#f5f0e3" strokeWidth={10} />
    <path d={tile.parks} fill="#a5e8c6" stroke="#a5e8c6" strokeWidth={4} />
    <path d={tile.urban} fill="#eef3f9" stroke="#eef3f9" strokeWidth={6} />
    <path d={tile.water} fill="#86d5ee" />
    <path d={tile.rivers} stroke="#86d5e6" strokeWidth={3} vectorEffect="non-scaling-stroke" />
    <path d={tile.thin} stroke="#a3bcc4" strokeWidth={1} vectorEffect="non-scaling-stroke" />
    <path d={tile.roads} stroke="#a6b8d2" strokeWidth={3} vectorEffect="non-scaling-stroke" />
    <path
      d={tile.borders}
      stroke="#4b5d63"
      strokeWidth={1.5}
      strokeDasharray="5 4"
      strokeLinecap="butt"
      vectorEffect="non-scaling-stroke"
    />
  </g>
);

const Shield = ({ route, x, y }: { route: number; x: number; y: number }) => (
  <g transform={`translate(${x} ${y})`}>
    <path
      d="M-14,-20 Q-7,-16 0,-19 Q7,-16 14,-20 L18,-14 Q17,-11 18,-6 C20,8 12,16 0,21 C-12,16 -20,8 -18,-6 Q-17,-11 -18,-14Z"
      fill="#fff"
      stroke="#8c9cc0"
      strokeWidth={1.5}
      strokeLinejoin="round"
    />
    <path d="M-13,-17 Q-6,-13 0,-16 Q6,-13 13,-17 L16,-13 L15,-9 L-15,-9 L-16,-13Z" fill="#d0605f" />
    <path d="M-16,-7 L16,-7 C18,7 11,14 0,18 C-11,14 -18,7 -16,-7Z" fill="#3b73c8" />
    <text y={10} textAnchor="middle" fontSize={19} fontWeight={500} fill="#fff">
      {route}
    </text>
  </g>
);

const LargePin = ({ letter, x, y, fill, stroke }: { letter: string; x: number; y: number; fill: string; stroke: string }) => (
  <g transform={`translate(${x} ${y})`}>
    <path
      d="M0,0 C-2,-16 -8,-24 -18,-34 C-23,-39 -26,-44 -26,-51 A26,26 0 0 1 26,-51 C26,-44 23,-39 18,-34 C8,-24 2,-16 0,0Z"
      fill={fill}
      stroke={stroke}
      strokeWidth={2}
    />
    <text y={-41} textAnchor="middle" fontSize={29} fontWeight={500} fill="#fff">
      {letter}
    </text>
  </g>
);

const RouteMap = () => (
  <svg viewBox="0 0 1252 835" className="block h-auto w-full font-[Roboto,sans-serif]" role="img" aria-label="Route map">
    <rect width={1252} height={835} fill="#c8f1de" />
    {TILES.map((tile) => (
      <Tile key={tile.transform} tile={tile} />
    ))}
    <path
      d="M40,106 L60,104 L62,116 L42,120Z M395,57 L405,55 L408,66 L398,68Z M190,520 L200,518 L205,530 L195,536Z M935,238 L943,236 L948,250 L938,252Z"
      fill="#cdcfca"
      stroke="#cdcfca"
      strokeWidth={4}
      strokeLinejoin="round"
    />
    {SHIELDS.map(([route, x, y]) => (
      <Shield key={`${route}-${x}`} route={route} x={x} y={y} />
    ))}
    <g stroke="#fff" strokeOpacity={0.85} strokeWidth={5} strokeLinejoin="round" paintOrder="stroke">
      <g fontSize={33} fontWeight={500} fill="#55585c" letterSpacing={4}>
        <text x={300} y={211}>
          ILLINOIS
        </text>
        <text x={937} y={211}>
          INDIANA
        </text>
      </g>
      <g fontSize={29} fill="#23835f" textAnchor="middle">
        <text x={942} y={624}>
          Hoosier
        </text>
        <text x={942} y={654}>
          National Forest
        </text>
      </g>
      {CITIES.map((city) => (
        <text
          key={`${city.name}-${city.x}`}
          x={city.x}
          y={city.y}
          fontSize={cityFontSize(city)}
          fontWeight={city.bold ? 500 : 400}
          fill={city.bold ? "#2b2e31" : "#3c4043"}
        >
          {city.name}
        </text>
      ))}
    </g>
    {CITIES.map(
      (city) =>
        city.dot && (
          <circle
            key={`${city.name}-${city.x}`}
            cx={city.dot[0]}
            cy={city.dot[1]}
            r={city.dot[2] - 1}
            fill="#fff"
            stroke="#2b2e31"
            strokeWidth={2}
          />
        ),
    )}
    <path d={ROUTE} fill="none" stroke="#10e81c" strokeOpacity={0.6} strokeWidth={10} strokeLinecap="round" strokeLinejoin="round" />
    <LargePin letter="D" x={242} y={572} fill="#9069a8" stroke="#65457d" />
    <LargePin letter="O" x={974} y={329} fill="#88a800" stroke="#647c00" />
    {PIN_TIPS.map(([x, y]) => (
      <path
        key={`${x}-${y}`}
        transform={`translate(${x} ${y})`}
        d="M0,0 C-1,-6 -3,-9 -7,-13 C-9,-15 -10,-17 -10,-20 A10,10 0 0 1 10,-20 C10,-17 9,-15 7,-13 C3,-9 1,-6 0,0Z"
        fill="#ea4335"
        stroke="#c5281c"
        strokeWidth={1}
      />
    ))}
    <text x={13} y={822} fontSize={36} fontWeight={700} className="font-[Lato,sans-serif] drop-shadow-[0_0_4px_#fff]">
      <tspan fill="#4a84ee">G</tspan>
      <tspan fill="#e2463c">o</tspan>
      <tspan fill="#f2b818">o</tspan>
      <tspan fill="#4a84ee">g</tspan>
      <tspan fill="#3aa457">l</tspan>
      <tspan fill="#e2463c">e</tspan>
    </text>
    <rect x={997} y={804} width={255} height={31} fill="#f2fbf7" fillOpacity={0.75} />
    <text x={1247} y={828} textAnchor="end" fontSize={23} fill="#444" className="font-['Liberation_Sans',sans-serif]">
      Map data ©2026 Google
    </text>
  </svg>
);

const PinOffIcon = () => (
  <svg viewBox="0 0 22 28" className="h-7 w-[22px]" aria-hidden="true">
    <path d="M11,28 C10,28 0,17 0,11 A11,11 0 0 1 22,11 C22,17 12,28 11,28Z" fill="currentColor" />
    <path d="M7,7 L15,15 M15,7 L7,15" stroke="#fff" strokeWidth={3} strokeLinecap="round" />
  </svg>
);

const RefreshIcon = () => (
  <svg viewBox="0 0 28 28" className="size-7" aria-hidden="true">
    <path d="M21,22 A11,11 0 1 1 21,7" fill="none" stroke="currentColor" strokeWidth={5} strokeLinecap="round" />
    <path d="M27,1 Q28,1 28,2 L28,11 Q28,12 27,12 L18,12 Q16,12 17,10Z" fill="currentColor" />
  </svg>
);

const ChevronIcon = () => (
  <svg viewBox="0 0 24 16" className="h-4 w-6" aria-hidden="true">
    <path d="M3,3 L12,12 L21,3" fill="none" stroke="currentColor" strokeWidth={5} strokeLinecap="round" strokeLinejoin="round" />
  </svg>
);

const SignpostIcon = () => (
  <svg viewBox="0 0 86 86" className="size-full" aria-hidden="true">
    <path d="M25,20 L61,20 Q66,20 66,25 L66,35 Q66,40 61,40 L25,40 L16,32 Q14,30 16,28Z" fill="#fff" />
    <path d="M25,43 L62,43 L71,51 Q73,53 71,55 L62,62 L25,62 Q20,62 20,57 L20,48 Q20,43 25,43Z" fill="#fff" />
    <path d="M43,19 L43,68" stroke="#fff" strokeWidth={4} strokeLinecap="round" />
  </svg>
);

const MaskRow = ({ cells }: { cells: string[] }) => (
  <span className="flex flex-1">
    {cells.map((color, i) => (
      <span key={i} className="flex-1" style={{ backgroundColor: color }} />
    ))}
  </span>
);

const CARD = "rounded-lg border border-[#dfdfdf] bg-white shadow-[4px_8px_20px_rgba(0,0,0,0.2)]";

const CARD_HEADER =
  "flex h-[110px] items-start border-b border-[#dfdfdf] px-9 pt-[22px] shadow-[0_4px_16px_rgba(0,0,0,0.06)]";

export default function App() {
  return (
    <div className="flex h-screen overflow-hidden bg-[#f9f9f9] font-[Inter,sans-serif] text-[28px] leading-[43px] text-[#212529]">
      <main className="min-w-0 flex-1 pr-7 pl-[27px]">
        <h1 className="flex h-18 items-center justify-center pb-1.5 text-[34px] font-medium">Shipment Tracking</h1>

        <section className={`${CARD} flex h-22 items-center text-[#6c757d]`}>
          <p className="w-[1500px] shrink text-center">MOST RECENT UPDATE: 03/01/2026 04:31 CT</p>
          <p className="ml-[-64px] flex-1 text-center">LOCATION: SAINT LOUIS,MO</p>
          <button type="button" aria-label="Expand update" className="-ml-12 pr-[22px]">
            <ChevronIcon />
          </button>
        </section>

        <div className="mt-[58px] grid grid-cols-2 gap-14">
          <section className={`${CARD} min-h-[1600px]`}>
            <header className={`${CARD_HEADER} gap-3.5`}>
              <h2 className="font-bold">Route Information</h2>
              <button type="button" aria-label="Hide route pins" className="pt-[7px] text-[#6c757d]">
                <PinOffIcon />
              </button>
            </header>

            <div className="px-9 pt-9">
              <p>
                <b>Source:</b> Trucker Tools
              </p>
              <p className="flex items-center gap-7">
                <b>Cell:</b>
                <span className="mb-1 flex h-5 w-[174px]" aria-label="Hidden phone number">
                  <MaskRow cells={CELL_MASK} />
                </span>
              </p>
              <p>
                <b>Order Status:</b> Potential Detention Detected
              </p>
              <button type="button" className="block h-[67px] rounded-lg bg-[#007bff] px-[22px] text-white">
                Click Here for Details
              </button>

              <p className="mt-[43px]">
                <b>*ETA To Final Destination::</b> 03/01/2026 06:06 CT [-01:00:00 from local]
              </p>
              <p className="mt-px pl-[30px] text-[#dc3545]">*does not calculate based on driver's available hours of service</p>

              <h3 className="mt-[43px] text-[34px] font-bold">Route Information</h3>
              <div className="pl-3.5 text-[#6c757d]">
                <p className="mt-1 flex items-center gap-2">
                  <b>Origin:</b>
                  <span className="flex h-9 w-[590px]" aria-label="Hidden address">
                    <span className="h-[18px] w-3 bg-[#e0e0e2]" />
                    <span className="flex flex-1 flex-col">
                      {ORIGIN_MASK.map((cells, i) => (
                        <MaskRow key={i} cells={cells} />
                      ))}
                    </span>
                  </span>
                </p>
                <ul className="pt-0.5">
                  {PINGS.map((city, i) => (
                    <li key={i}>
                      <b>Ping :</b> {city}
                    </li>
                  ))}
                </ul>
              </div>
            </div>
          </section>

          <section className={`${CARD} min-h-[1600px]`}>
            <header className={`${CARD_HEADER} gap-2.5`}>
              <h2 className="font-bold">Mapping &amp; Tracking</h2>
              <button type="button" aria-label="Refresh map" className="pt-[7px] text-[#6c757d]">
                <RefreshIcon />
              </button>
            </header>
            <div className="px-[62px] pt-[35px]">
              <RouteMap />
            </div>
          </section>
        </div>
      </main>

      <div className="flex w-[21px] justify-end border-l border-[#e8e8e8] bg-[#fafafa] pt-[270px]">
        <div className="h-[416px] w-3.5 rounded-l-full bg-[#c1c1c1]" />
      </div>

      <button type="button" aria-label="Open guide" className="fixed right-[58px] bottom-1 size-[86px] rounded-full bg-[#003f80]">
        <SignpostIcon />
      </button>
    </div>
  );
}
